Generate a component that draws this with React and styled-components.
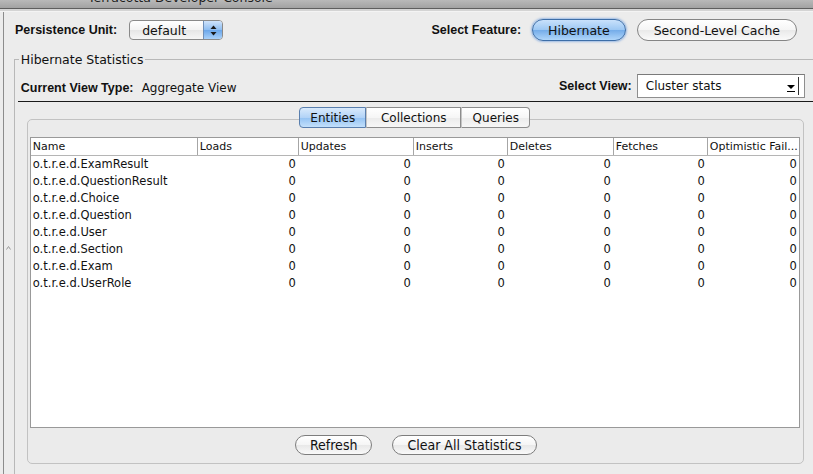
import styled, { createGlobalStyle, css } from "styled-components"

const Global = createGlobalStyle`
  html, body {
    margin: 0;
    padding: 0;
    overflow: hidden;
    background: #ececec;
  }
  body {
    font-family: "DejaVu Sans", sans-serif;
    color: #111;
  }
`

const rows = [
    "o.t.r.e.d.ExamResult",
    "o.t.r.e.d.QuestionResult",
    "o.t.r.e.d.Choice",
    "o.t.r.e.d.Question",
    "o.t.r.e.d.User",
    "o.t.r.e.d.Section",
    "o.t.r.e.d.Exam",
    "o.t.r.e.d.UserRole",
]

const colunas = ["Name", "Loads", "Updates", "Inserts", "Deletes", "Fetches", "Optimistic Fail..."]
const larguras = "166px 101px 115px 94px 106px 94px 92px"

export default function App() {
    return (
        <>
            <Global />
            <TitleBar>
                <TitleText>Terracotta Developer Console</TitleText>
            </TitleBar>
            <TitleShade />

            <Frame>
                <Toolbar>
                    <Grupo>
                        <Label>Persistence Unit:</Label>
                        <Popup>
                            <span>default</span>
                            <Stepper>
                                <svg width="7" height="11" viewBox="0 0 7 11">
                                    <path d="M3.5 0.5 L6.5 4 L0.5 4 Z" fill="#1a1a1a" />
                                    <path d="M3.5 10.5 L6.5 7 L0.5 7 Z" fill="#1a1a1a" />
                                </svg>
                            </Stepper>
                        </Popup>
                    </Grupo>

                    <Grupo>
                        <Label>Select Feature:</Label>
                        <Pill $ativo>Hibernate</Pill>
                        <Pill>Second-Level Cache</Pill>
                    </Grupo>
                </Toolbar>

                <Corpo>
                    <Splitter>
                        <svg width="5" height="4" viewBox="0 0 5 4">
                            <path d="M0.5 3.5 L2.5 0.5 L4.5 3.5" stroke="#9a9a9a" fill="none" />
                        </svg>
                    </Splitter>

                    <Secao>
                        <Legenda>Hibernate Statistics</Legenda>

                        <ViewRow>
                            <div>
                                <Label>Current View Type:</Label> <Valor>Aggregate View</Valor>
                            </div>
                            <Grupo>
                                <Label>Select View:</Label>
                                <Combo>
                                    <span>Cluster stats</span>
                                    <ComboSeta>
                                        <svg width="10" height="9" viewBox="0 0 10 9">
                                            <path d="M1 1 L9 1 L5 5 Z" fill="#000" />
                                            <rect x="1" y="7" width="8" height="1" fill="#000" />
                                        </svg>
                                    </ComboSeta>
                                </Combo>
                            </Grupo>
                        </ViewRow>

                        <Linha />

                        <Abas>
                            <Aba $ativo $primeira>Entities</Aba>
                            <Aba $largura={95}>Collections</Aba>
                            <Aba $ultima $largura={69}>Queries</Aba>
                        </Abas>

                        <Painel>
                            <Tabela>
                                <Cabecalho>
                                    {colunas.map((c, i) => (
                                        <CelulaTopo key={c} $primeira={i === 0}>{c}</CelulaTopo>
                                    ))}
                                </Cabecalho>
                                {rows.map((r) => (
                                    <Linhas key={r}>
                                        <Celula>{r}</Celula>
                                        {[1, 2, 3, 4, 5, 6].map((n) => (
                                            <Celula key={n} $numero>0</Celula>
                                        ))}
                                    </Linhas>
                                ))}
                            </Tabela>

                            <Botoes>
                                <Botao>Refresh</Botao>
                                <Botao>Clear All Statistics</Botao>
                            </Botoes>
                        </Painel>
                    </Secao>
                </Corpo>
            </Frame>
        </>
    )
}

const TitleBar = styled.div`
    height: 8px;
    overflow: hidden;
    background: linear-gradient(#b9b9b9, #a2a2a2);
    border-bottom: 1px solid #5e5e5e;
    padding-left: 88px;
`
const TitleText = styled.div`
    font-family: "DejaVu Sans", sans-serif;
    font-size: 12.5px;
    line-height: 14px;
    margin-top: -9px;
    color: #1c1c1c;
`
const TitleShade = styled.div`
    height: 2px;
    background: #d4d4d4;
    border-bottom: 1px solid #f4f4f4;
`
const Frame = styled.div`
    margin-left: 3px;
    border-left: 1px solid #8c8c8c;
    height: 470px;
`
const Toolbar = styled.div`
    display: flex;
    justify-content: space-between;
    align-items: center;
    padding: 7px 16px 0 11px;
    height: 22px;
`
const Grupo = styled.div`
    display: flex;
    align-items: center;
    gap: 11px;
`
const Label = styled.span`
    font-family: "Liberation Sans", Arial, sans-serif;
    font-weight: 700;
    font-size: 12.5px;
    color: #111;
`
const Valor = styled.span`
    font-family: "DejaVu Sans", sans-serif;
    font-size: 12px;
    margin-left: 3px;
`
const Popup = styled.div`
    height: 18px;
    width: 80px;
    margin-left: 1px;
    padding-left: 12px;
    box-sizing: content-box;
    border: 1px solid #8a8a8a;
    border-radius: 4px;
    background: linear-gradient(#ffffff, #f3f3f3 50%, #e6e6e6 51%, #f6f6f6);
    display: flex;
    align-items: center;
    justify-content: space-between;
    overflow: hidden;
    font-size: 12.5px;
`
const Stepper = styled.div`
    width: 18px;
    height: 100%;
    border-left: 1px solid #6f8fb8;
    background: linear-gradient(#cfe3fb, #8dbdf1 50%, #6aa6ea 51%, #a9d1fa);
    display: flex;
    align-items: center;
    justify-content: center;
`
const Pill = styled.div`
    height: 20px;
    border-radius: 11px;
    padding: 0 16px;
    display: flex;
    align-items: center;
    font-family: "DejaVu Sans", sans-serif;
    font-size: 12.5px;
    border: 1px solid #858585;
    background: linear-gradient(#ffffff, #f5f5f5 50%, #e9e9e9 51%, #fafafa);
    ${({ $ativo }) => $ativo && css`
        padding: 0 15px;
        border-color: #3d6ea8;
        background: linear-gradient(#c9e1fb, #9cc7f3 50%, #74ace9 51%, #b0d6fa);
        box-shadow: 0 0 2px 1px rgba(80, 140, 220, 0.5);
    `}
`
const Corpo = styled.div`
    display: flex;
    margin-top: 11px;
`
const Splitter = styled.div`
    width: 10px;
    display: flex;
    justify-content: center;
    padding-top: 194px;
    padding-right: 1px;
    box-sizing: border-box;
`
const Secao = styled.fieldset`
    margin: 0;
    padding: 0 0 20px 0;
    min-width: 0;
    width: 820px;
    border: 1px solid #b8b8b8;
    border-right: none;
    border-bottom: none;
`
const Legenda = styled.legend`
    margin-left: 4px;
    padding: 0 2px;
    font-family: "DejaVu Sans", sans-serif;
    font-size: 12.5px;
    line-height: 15px;
    color: #111;
`
const ViewRow = styled.div`
    display: flex;
    justify-content: space-between;
    align-items: center;
    width: 784px;
    margin: 7px 0 0 6px;
    height: 24px;

    ${Grupo} {
        gap: 5px;
    }
`
const Combo = styled.div`
    height: 22px;
    width: 158px;
    padding-left: 8px;
    box-sizing: content-box;
    border: 1px solid #8e8e8e;
    border-top-color: #7a7a7a;
    background: #fff;
    display: flex;
    align-items: center;
    justify-content: space-between;
    font-size: 12px;
`
const ComboSeta = styled.div`
    width: 12px;
    height: 16px;
    margin-right: 5px;
    border-right: 1px solid #333;
    display: flex;
    align-items: flex-end;
    justify-content: flex-start;
    padding-bottom: 2px;
`
const Linha = styled.div`
    height: 1px;
    background: #1a1a1a;
    margin: 3px 0 0 3px;
`
const Abas = styled.div`
    display: flex;
    justify-content: center;
    width: 776px;
    margin: 5px 0 -9px 12px;
    position: relative;
    z-index: 1;
    height: 21px;
`
const Aba = styled.div`
    width: ${({ $largura }) => $largura || 67}px;
    box-sizing: border-box;
    height: 21px;
    display: flex;
    align-items: center;
    justify-content: center;
    font-size: 12px;
    border: 1px solid #8d8d8d;
    border-left: 1px solid #c4c4c4;
    background: linear-gradient(#ffffff, #f6f6f6 50%, #ebebeb 51%, #f7f7f7);
    ${({ $primeira }) => $primeira && css`
        border-left-color: #8d8d8d;
        border-radius: 4px 0 0 4px;
    `}
    ${({ $ultima }) => $ultima && css`
        border-radius: 0 4px 4px 0;
    `}
    ${({ $ativo }) => $ativo && css`
        border-color: #5a7fae;
        background: linear-gradient(#d9eafc, #b2d3f7 50%, #93c2f3 51%, #c3e0fb);
    `}
`
const Painel = styled.div`
    width: 772px;
    margin-left: 12px;
    border: 1px solid #c2c2c2;
    border-radius: 5px;
    padding: 17px 1px 8px 2px;
    background: #ebebeb;
`
const Tabela = styled.div`
    width: 768px;
    height: 289px;
    border: 1px solid #999;
    background: #fff;
    font-size: 11.5px;
`
const Cabecalho = styled.div`
    display: grid;
    grid-template-columns: ${larguras};
    height: 17px;
    border-bottom: 1px solid #b5b5b5;
    font-size: 11px;
`
const CelulaTopo = styled.div`
    padding-left: 2px;
    line-height: 17px;
    white-space: nowrap;
    overflow: hidden;
    border-left: ${({ $primeira }) => ($primeira ? "none" : "1px solid #a6a6a6")};
`
const Linhas = styled.div`
    display: grid;
    grid-template-columns: ${larguras};
    height: 17px;
`
const Celula = styled.div`
    line-height: 17px;
    padding: 0 2px;
    white-space: nowrap;
    text-align: ${({ $numero }) => ($numero ? "right" : "left")};
`
const Botoes = styled.div`
    display: flex;
    justify-content: center;
    gap: 20px;
    margin-top: 7px;
`
const Botao = styled.div`
    height: 18px;
    padding: 0 14px;
    border-radius: 10px;
    border: 1px solid #7d7d7d;
    background: linear-gradient(#ffffff, #f5f5f5 50%, #e8e8e8 51%, #f9f9f9);
    display: flex;
    align-items: center;
    font-family: "Liberation Sans Narrow", "DejaVu Sans Condensed", "Liberation Sans", sans-serif;
    font-stretch: condensed;
    font-size: 14px;
    color: #111;
`
